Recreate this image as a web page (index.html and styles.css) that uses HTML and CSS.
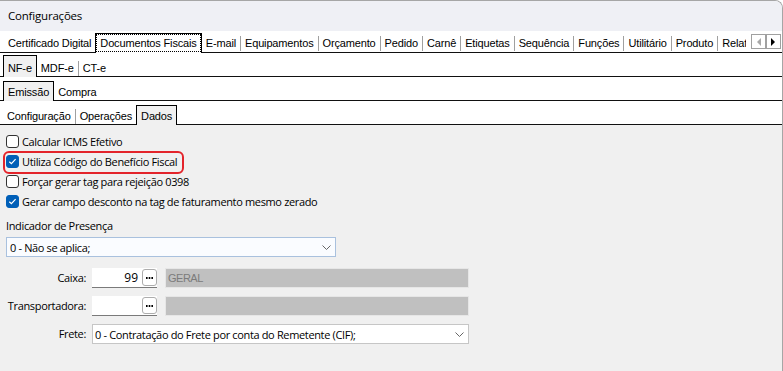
FILE: index.html
```html
<!DOCTYPE html>
<html lang="pt-BR">
<head>
    <meta charset="UTF-8">
    <meta name="viewport" content="width=device-width, initial-scale=1.0">
    <title>Configurações</title>
    <link rel="stylesheet" href="styles.css">
</head>
<body>
    <div class="window">
        <div class="titlebar">Configurações</div>

        <div class="tabrow main">
            <div class="tabs">
                <span class="tab">Certificado Digital</span>
                <span class="tab active">Documentos Fiscais</span>
                <span class="tab">E-mail</span>
                <span class="tab sep">Equipamentos</span>
                <span class="tab sep">Orçamento</span>
                <span class="tab sep">Pedido</span>
                <span class="tab sep">Carnê</span>
                <span class="tab sep">Etiquetas</span>
                <span class="tab sep">Sequência</span>
                <span class="tab sep">Funções</span>
                <span class="tab sep">Utilitário</span>
                <span class="tab sep">Produto</span>
                <span class="tab sep">Relatórios</span>
            </div>
            <div class="scroller">
                <span class="arrow off">
                    <svg width="5" height="8" viewBox="0 0 5 8"><path d="M5 0 L1 4 L5 8 Z" fill="#a8a8a8"/></svg>
                </span>
                <span class="arrow">
                    <svg width="5" height="8" viewBox="0 0 5 8"><path d="M0 0 L4 4 L0 8 Z" fill="#000"/></svg>
                </span>
            </div>
        </div>

        <div class="tabrow sub">
            <span class="tab active tall">NF-e</span>
            <span class="tab">MDF-e</span>
            <span class="tab sep">CT-e</span>
        </div>

        <div class="tabrow sub">
            <span class="tab active">Emissão</span>
            <span class="tab">Compra</span>
        </div>

        <div class="tabrow sub">
            <span class="tab">Configuração</span>
            <span class="tab sep">Operações</span>
            <span class="tab active">Dados</span>
        </div>

        <div class="panel">
            <div class="checks">
                <label class="check"><span class="box"></span>Calcular ICMS Efetivo</label>
                <label class="check">
                    <span class="box on"><svg width="11" height="11" viewBox="0 0 11 11"><path d="M2.3 5.7 L4.4 7.7 L8.6 3.2" fill="none" stroke="#fff" stroke-width="1.2"/></svg></span>
                    Utiliza Código do Benefício Fiscal
                </label>
                <label class="check"><span class="box"></span>Forçar gerar tag para rejeição 0398</label>
                <label class="check">
                    <span class="box on"><svg width="11" height="11" viewBox="0 0 11 11"><path d="M2.3 5.7 L4.4 7.7 L8.6 3.2" fill="none" stroke="#fff" stroke-width="1.2"/></svg></span>
                    Gerar campo desconto na tag de faturamento mesmo zerado
                </label>
                <!-- marcação em vermelho do print original -->
                <div class="highlight"></div>
            </div>

            <div class="field-title">Indicador de Presença</div>
            <div class="select presence">
                <span>0 - Não se aplica;</span>
                <svg width="9" height="5" viewBox="0 0 9 5"><path d="M0.5 0.5 L4.5 4.5 L8.5 0.5" fill="none" stroke="#666"/></svg>
            </div>

            <div class="form">
                <span class="label">Caixa:</span>
                <div class="lookup">
                    <span class="value">99</span>
                    <span class="dots-btn"><svg width="7" height="2" viewBox="0 0 7 2"><rect x="0" y="0" width="1.6" height="2"/><rect x="2.7" y="0" width="1.6" height="2"/><rect x="5.4" y="0" width="1.6" height="2"/></svg></span>
                </div>
                <div class="desc">GERAL</div>

                <span class="label">Transportadora:</span>
                <div class="lookup">
                    <span class="value"></span>
                    <span class="dots-btn"><svg width="7" height="2" viewBox="0 0 7 2"><rect x="0" y="0" width="1.6" height="2"/><rect x="2.7" y="0" width="1.6" height="2"/><rect x="5.4" y="0" width="1.6" height="2"/></svg></span>
                </div>
                <div class="desc"></div>

                <span class="label">Frete:</span>
                <div class="select frete">
                    <span>0 - Contratação do Frete por conta do Remetente (CIF);</span>
                    <svg width="9" height="5" viewBox="0 0 9 5"><path d="M0.5 0.5 L4.5 4.5 L8.5 0.5" fill="none" stroke="#666"/></svg>
                </div>
            </div>
        </div>
    </div>
</body>
</html>
```

FILE: styles.css
```css
body {
    margin: 0;
    background-color: #fff;
    font-family: "Liberation Sans", Arial, sans-serif;
    font-size: 12px;
    color: #000;
}
.window {
    width: 782px;
    height: 370px;
    border-top: 1px solid #a6a6a6;
    border-right: 1px solid #a6a6a6;
    border-top-right-radius: 8px;
    overflow: hidden;
    display: flex;
    flex-direction: column;
}
.titlebar {
    height: 30px;
    line-height: 30px;
    padding-left: 8px;
    background-color: #eff0f5;
    font-family: "Open Sans", "Liberation Sans", sans-serif;
    font-size: 11.5px;
    letter-spacing: -0.2px;
    flex-shrink: 0;
}

/* abas */
.tabrow {
    display: flex;
    align-items: flex-end;
    flex-shrink: 0;
    background-color: #fff;
    border-bottom: 1px solid #111;
    font-size: 11px;
    letter-spacing: -0.15px;
}
.tabrow.main {
    height: 21px;
    padding-left: 4px;
}
.tabrow.sub {
    height: 23px;
    padding-left: 3px;
}
.tabs {
    display: flex;
    align-items: flex-end;
    flex: 1;
    min-width: 0;
    align-self: stretch;
    overflow: hidden;
    margin-bottom: -1px;
    padding-bottom: 1px;
}
.tab {
    flex-shrink: 0;
    padding: 0 4px;
    line-height: 15px;
    white-space: nowrap;
}
.tabrow.main .tab {
    margin-bottom: 1px;
}
.tab.sep {
    border-left: 1px solid #a0a0a0;
}
.tab.active {
    border: 1px solid #000;
    border-bottom: 0;
    margin-bottom: -1px;
    padding: 3px 4px 1px;
    background-color: #f0f0f0;
}
.tab.active.tall {
    padding-top: 5px;
}
.tabrow.main .tab.active {
    margin-bottom: -1px;
    padding: 2px 4px;
    background-color: #fff;
    outline: 1px dotted #000;
    outline-offset: -2px;
}
.scroller {
    display: flex;
    align-self: flex-start;
    margin: 3px 1px 0 5px;
}
.arrow {
    width: 15px;
    height: 15px;
    box-sizing: border-box;
    border: 1px solid #a0a0a0;
    background-color: #fff;
    display: flex;
    align-items: center;
    justify-content: center;
}

/* conteúdo */
.panel {
    flex: 1;
    background-color: #f0f0f0;
    padding: 6px 0 0 6px;
    font-family: "Open Sans", "Liberation Sans", sans-serif;
    font-size: 11px;
    letter-spacing: -0.35px;
}
.checks {
    position: relative;
}
.check {
    display: flex;
    align-items: center;
    gap: 3px;
    height: 20px;
}
.box {
    width: 13px;
    height: 13px;
    box-sizing: border-box;
    border: 1px solid #333;
    border-radius: 3px;
    background-color: #fff;
    flex-shrink: 0;
    display: flex;
    align-items: center;
    justify-content: center;
}
.box.on {
    background-color: #005fb8;
    border-color: #005fb8;
}
.highlight {
    position: absolute;
    left: -3px;
    top: 20px;
    width: 181px;
    height: 23px;
    box-sizing: border-box;
    border: 2px solid #e3242b;
    border-radius: 6px;
}
.field-title {
    margin-top: 7px;
    line-height: 16px;
}
.select {
    display: flex;
    align-items: center;
    justify-content: space-between;
    box-sizing: border-box;
    height: 20px;
    padding: 0 4px 0 3px;
    border: 1px solid #a9c1de;
    background-color: #fafcff;
}
.select.presence {
    width: 330px;
    margin-top: 3px;
}
.select.frete {
    grid-column: 2 / 4;
    padding-left: 2px;
    border-color: #c6c6c6;
    background-color: #fff;
}
.form {
    display: grid;
    grid-template-columns: 86px 73px 304px;
    grid-auto-rows: 20px;
    row-gap: 8px;
    margin-top: 11px;
}
.label {
    text-align: right;
    padding-right: 6px;
    line-height: 20px;
}
.lookup {
    display: flex;
    align-items: center;
    justify-content: flex-end;
    width: 65px;
    box-sizing: border-box;
    background-color: #fff;
    border-bottom: 1px solid #7a7a7a;
}
.lookup .value {
    padding-right: 4px;
    font-size: 12px;
    letter-spacing: 0;
}
.dots-btn {
    width: 15px;
    height: 17px;
    box-sizing: border-box;
    border: 1px solid #adadad;
    border-radius: 3px;
    background-color: #fff;
    display: flex;
    align-items: center;
    justify-content: center;
}
.desc {
    box-sizing: border-box;
    background-color: #c0c0c0;
    border: 1px solid #e6e6e6;
    color: #7b7b7b;
    padding-left: 2px;
    line-height: 18px;
    font-family: "Liberation Sans", Arial, sans-serif;
    font-size: 11px;
    letter-spacing: -0.5px;
}
```
